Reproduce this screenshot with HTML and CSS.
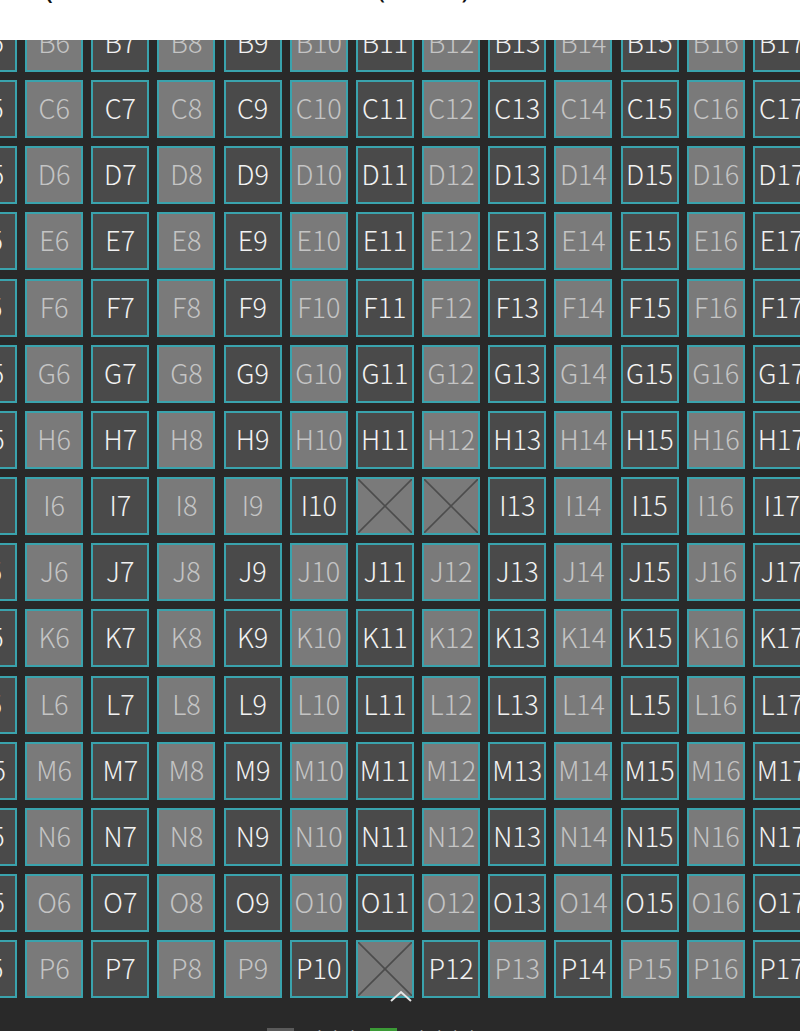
FILE: index.html
```html
<!DOCTYPE html>
<html lang="ko">
<head>
    <meta charset="UTF-8">
    <meta name="viewport" content="width=device-width, initial-scale=1.0">
    <title>좌석 선택</title>
    <link rel="stylesheet" href="styles.css">
</head>
<body>
    <div class="stage">
        <div class="stage-title">
            <span class="arrow">(</span>
            <span class="name">SCREEN</span>
            <span class="sub">(STAGE)</span>
        </div>
    </div>

    <div class="map">
        <div class="seats-wrap">
            <div class="seats" id="seats"></div>
        </div>
        <svg class="collapse" width="24" height="14" viewBox="0 0 24 14">
            <polyline points="2,12 12,3 22,12" fill="none" stroke="#e6e6e6" stroke-width="2"/>
        </svg>
        <div class="legend">
            <span class="key"><i class="box normal"></i>일반석</span>
            <span class="key"><i class="box wheel"></i>장애인석</span>
        </div>
    </div>

    <script>
        var rows = 'BCDEFGHIJKLMNOP'.split('');
        // seats that break the usual light / dark pattern
        var overrides = {
            I9: 'light', I10: 'dark', I11: 'off', I12: 'off',
            P9: 'light', P10: 'dark', P11: 'off', P12: 'dark',
            P13: 'light', P14: 'dark', P15: 'light'
        };
        var seats = document.getElementById('seats');

        rows.forEach(function (row) {
            for (var col = 5; col <= 17; col++) {
                var id = row + col;
                var type = (col % 2 === 0) ? 'light' : 'dark';
                if (overrides[id]) type = overrides[id];

                var seat = document.createElement('div');
                seat.className = 'seat ' + type;
                if (type === 'off') {
                    seat.innerHTML = '<svg viewBox="0 0 54 54" preserveAspectRatio="none">' +
                        '<line x1="0" y1="0" x2="54" y2="54"/><line x1="54" y1="0" x2="0" y2="54"/></svg>';
                } else {
                    seat.textContent = id;
                }
                seats.appendChild(seat);
            }
        });
    </script>
</body>
</html>
```

FILE: styles.css
```css
body {
    margin: 0;
    padding: 0;
    font-family: 'Noto Sans CJK KR', 'Noto Sans', sans-serif;
    background-color: #fff;
}
.stage {
    height: 40px;
    overflow: hidden;
    background-color: #fff;
}
.stage-title {
    display: flex;
    align-items: baseline;
    margin-top: -30px;
    padding-left: 44px;
    font-family: 'Noto Sans', sans-serif;
    font-size: 30px;
    line-height: 34px;
    color: #111;
}
.stage-title .name {
    margin-left: 200px;
}
.stage-title .sub {
    margin-left: 14px;
    font-size: 26px;
}
.map {
    position: relative;
    height: 991px;
    overflow: hidden;
    background-color: #292929;
}
.seats-wrap {
    overflow: hidden;
}
.seats {
    display: grid;
    grid-template-columns: repeat(13, 58px);
    grid-auto-rows: 58px;
    gap: 8.17px;
    margin: -26px 0 0 -41px;
}
.seat {
    box-sizing: border-box;
    display: flex;
    align-items: center;
    justify-content: center;
    border: 2px solid #3aa3ad;
    font-size: 27px;
    padding-bottom: 3px;
    white-space: nowrap;
}
.seat.dark {
    background-color: #4a4a4a;
    color: #f2f2f2;
    font-weight: 300;
}
.seat.light {
    background-color: #7a7a7a;
    color: #c4c4c4;
    font-weight: 300;
}
.seat.off {
    background-color: #7a7a7a;
    padding: 0;
}
.seat.off svg {
    width: 100%;
    height: 100%;
}
.seat.off line {
    stroke: #4c4c4c;
    stroke-width: 1.6;
}
.collapse {
    position: absolute;
    left: 389px;
    top: 949px;
}
.legend {
    display: flex;
    gap: 14px;
    margin-top: 27px;
    padding-left: 267px;
    font-size: 18px;
    color: #eee;
}
.key {
    display: flex;
    align-items: center;
    gap: 12px;
}
.box {
    display: inline-block;
    width: 27px;
    height: 20px;
}
.box.normal {
    background-color: #5a5a5a;
}
.box.wheel {
    background-color: #3b9a36;
}
```
